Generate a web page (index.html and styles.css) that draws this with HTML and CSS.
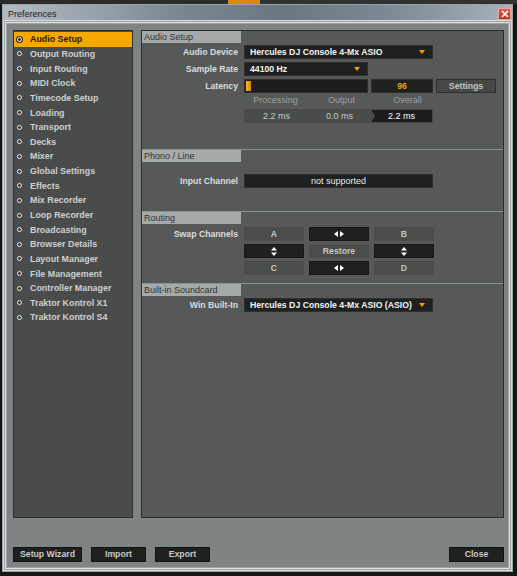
FILE: index.html
```html
<!DOCTYPE html>
<html>
<head>
	<meta charset="utf-8">
	<title>Preferences</title>
	<link rel="stylesheet" href="styles.css">
</head>
<body>
	<div class="taskbar"><span class="tb-left"></span><span class="tb-orange"></span><span class="tb-right"></span></div>
	<div class="window">
		<div class="titlebar">
			<span class="title">Preferences</span>
			<span class="close-btn">
				<svg width="8" height="8" viewBox="0 0 8 8"><path d="M1 1 L7 7 M7 1 L1 7" stroke="#fff" stroke-width="1.6"/></svg>
			</span>
		</div>
		<div class="body">
			<div class="panes">
				<!-- left menu -->
				<ul class="sidebar">
					<li class="active"><span class="dot"></span>Audio Setup</li>
					<li><span class="dot"></span>Output Routing</li>
					<li><span class="dot"></span>Input Routing</li>
					<li><span class="dot"></span>MIDI Clock</li>
					<li><span class="dot"></span>Timecode Setup</li>
					<li><span class="dot"></span>Loading</li>
					<li><span class="dot"></span>Transport</li>
					<li><span class="dot"></span>Decks</li>
					<li><span class="dot"></span>Mixer</li>
					<li><span class="dot"></span>Global Settings</li>
					<li><span class="dot"></span>Effects</li>
					<li><span class="dot"></span>Mix Recorder</li>
					<li><span class="dot"></span>Loop Recorder</li>
					<li><span class="dot"></span>Broadcasting</li>
					<li><span class="dot"></span>Browser Details</li>
					<li><span class="dot"></span>Layout Manager</li>
					<li><span class="dot"></span>File Management</li>
					<li><span class="dot"></span>Controller Manager</li>
					<li><span class="dot"></span>Traktor Kontrol X1</li>
					<li><span class="dot"></span>Traktor Kontrol S4</li>
				</ul>
				<!-- settings page -->
				<div class="main">
					<div class="section sec-audio">
						<div class="sec-head">Audio Setup</div>
						<div class="row">
							<span class="label">Audio Device</span>
							<div class="select wide">Hercules DJ Console 4-Mx ASIO<i class="arrow"></i></div>
						</div>
						<div class="row">
							<span class="label">Sample Rate</span>
							<div class="select mid">44100 Hz<i class="arrow"></i></div>
						</div>
						<div class="row">
							<span class="label">Latency</span>
							<div class="slider"><span class="knob"></span></div>
							<div class="value">96</div>
							<div class="button settings">Settings</div>
						</div>
						<div class="row times-head">
							<span class="label"></span>
							<span class="tcol">Processing</span>
							<span class="tcol">Output</span>
							<span class="tcol">Overall</span>
						</div>
						<div class="row">
							<span class="label"></span>
							<div class="times">
								<span class="tcol">2.2 ms</span>
								<span class="tcol">0.0 ms</span>
								<span class="tcol overall">2.2 ms</span>
							</div>
						</div>
					</div>
					<div class="section sec-phono">
						<div class="sec-head">Phono / Line</div>
						<div class="row">
							<span class="label">Input Channel</span>
							<div class="field wide">not supported</div>
						</div>
					</div>
					<div class="section sec-routing">
						<div class="sec-head">Routing</div>
						<div class="row">
							<span class="label">Swap Channels</span>
							<div class="grid">
								<div class="cell">A</div>
								<div class="cell dark"><svg width="10" height="6" viewBox="0 0 10 6"><path d="M4 0 L0 3 L4 6 Z M6 0 L10 3 L6 6 Z" fill="#fff"/></svg></div>
								<div class="cell">B</div>
								<div class="cell dark"><svg width="6" height="9" viewBox="0 0 6 9"><path d="M3 0 L6 3.6 L0 3.6 Z M0 5.4 L6 5.4 L3 9 Z" fill="#fff"/></svg></div>
								<div class="cell">Restore</div>
								<div class="cell dark"><svg width="6" height="9" viewBox="0 0 6 9"><path d="M3 0 L6 3.6 L0 3.6 Z M0 5.4 L6 5.4 L3 9 Z" fill="#fff"/></svg></div>
								<div class="cell">C</div>
								<div class="cell dark"><svg width="10" height="6" viewBox="0 0 10 6"><path d="M4 0 L0 3 L4 6 Z M6 0 L10 3 L6 6 Z" fill="#fff"/></svg></div>
								<div class="cell">D</div>
							</div>
						</div>
					</div>
					<div class="section sec-builtin">
						<div class="sec-head">Built-in Soundcard</div>
						<div class="row">
							<span class="label">Win Built-In</span>
							<div class="select wide">Hercules DJ Console 4-Mx ASIO (ASIO)<i class="arrow"></i></div>
						</div>
					</div>
				</div>
			</div>
			<div class="footer">
				<div class="button foot wizard">Setup Wizard</div>
				<div class="button foot">Import</div>
				<div class="button foot">Export</div>
				<span class="spacer"></span>
				<div class="button foot">Close</div>
			</div>
		</div>
	</div>
</body>
</html>
```

FILE: styles.css
```css
html, body {
	margin: 0;
	padding: 0;
}
body {
	width: 517px;
	height: 576px;
	overflow: hidden;
	background: #151616;
	font-family: "Liberation Sans", Arial, sans-serif;
	font-size: 8.7px;
	font-weight: bold;
	color: #d2d4d4;
}
.taskbar {
	display: flex;
	height: 4px;
	background: #2a2b2b;
}
.tb-left {
	width: 228px;
}
.tb-orange {
	width: 32px;
	background: #d98a10;
}
.tb-right {
	flex: 1;
	background: #303131;
}
.window {
	margin: 0 4px 0 2px;
	height: 568px;
	box-sizing: border-box;
	border: 1px solid #9aa2a8;
	background: #8f98a0;
	display: flex;
	flex-direction: column;
}
.titlebar {
	height: 17px;
	display: flex;
	align-items: center;
	padding: 0 1px 0 5px;
	background: linear-gradient(90deg, #b3bbc2 0%, #98a2ab 18%, #7a8690 35%, #6a7680 55%, #7c8893 75%, #95a0a9 90%, #a9b2b9 100%);
}
.title {
	flex: 1;
	font-size: 9px;
	font-weight: normal;
	color: #1e2226;
}
.close-btn {
	width: 13px;
	height: 12px;
	box-sizing: border-box;
	border: 1px solid #e8a8a0;
	background: linear-gradient(#e0604e, #b8321e);
	display: flex;
	align-items: center;
	justify-content: center;
}
.body {
	flex: 1;
	margin: 0 2px 2px 2px;
	border: 1px solid #dfe3e3;
	box-shadow: inset 0 0 0 1px #9ca2a2, 0 0 0 1px #9ca2a2, 0 0 0 2px #d8dcdc;
	background: #7e8483;
	padding: 7px 5px 6px 7px;
	display: flex;
	flex-direction: column;
}
.panes {
	display: flex;
	gap: 8px;
	height: 488px;
}
.sidebar {
	list-style: none;
	margin: 0;
	padding: 1px 0 0 0;
	width: 120px;
	box-sizing: border-box;
	border: 1px solid #2b2d2d;
	background: #4a4c4c;
}
.sidebar li {
	height: 14.65px;
	display: flex;
	align-items: center;
	padding-left: 3px;
	font-size: 8.9px;
	color: #cdcfcf;
}
.sidebar li.active {
	background: #f6a700;
	color: #1c1c1c;
}
.dot {
	width: 5px;
	height: 5px;
	box-sizing: border-box;
	border-radius: 50%;
	border: 1.5px solid #eeeeee;
	background: #3a3a3a;
	margin-right: 8px;
}
.sidebar li.active .dot {
	border-color: #ffffff;
	background: #2a2a2a;
	box-shadow: 0 0 0 1px #2a2a2a;
}
.main {
	flex: 1;
	box-sizing: border-box;
	border: 1px solid #2b2d2d;
	background: #575858;
	display: flex;
	flex-direction: column;
}
.section {
	border-top: 1px solid #8c9090;
}
.section:first-child {
	border-top: none;
}
.sec-audio { height: 118px; }
.sec-phono { height: 61px; }
.sec-routing { height: 71px; }
.sec-head {
	width: 97px;
	height: 12px;
	line-height: 12px;
	padding-left: 2px;
	background: #a5a9a9;
	color: #323434;
	font-size: 9px;
	font-weight: normal;
}
.row {
	display: flex;
	align-items: center;
	gap: 3px;
	margin-top: 3px;
	height: 14px;
}
.sec-audio .row:nth-child(2) { margin-top: 2px; }
.label {
	width: 96px;
	text-align: right;
	margin-right: 3px;
	color: #dcdede;
}
.select, .field, .slider, .value, .button, .times, .cell {
	box-sizing: border-box;
	height: 14px;
	line-height: 12px;
	border: 1px solid #2e2f2f;
}
.select {
	position: relative;
	background: #1f2020;
	color: #f4f4f4;
	padding-left: 5px;
}
.wide { width: 189px; }
.mid { width: 124px; }
.arrow {
	position: absolute;
	right: 7px;
	top: 4px;
	width: 0;
	height: 0;
	border-left: 3px solid transparent;
	border-right: 3px solid transparent;
	border-top: 4px solid #f2a200;
}
.slider {
	width: 124px;
	background: #1c1d1d;
	padding: 1px;
}
.knob {
	display: block;
	width: 5px;
	height: 10px;
	background: linear-gradient(90deg, #ffbd30, #d98200);
}
.value {
	width: 62px;
	background: #1f2020;
	color: #f2a000;
	text-align: center;
}
.button {
	background: #464747;
	color: #c4c6c6;
	text-align: center;
}
.settings {
	width: 60px;
}
.times-head {
	margin-top: 1px;
	height: 12px;
}
.times-head .tcol {
	width: 63px;
	text-align: center;
	color: #9c9e9e;
	font-weight: normal;
	font-size: 9px;
}
.times {
	display: flex;
	width: 189px;
	background: #4a4b4b;
	border-color: #474848;
}
.times .tcol {
	width: 63px;
	text-align: center;
	color: #c8caca;
	font-weight: normal;
	font-size: 9px;
}
.times .overall {
	position: relative;
	flex: 1;
	background: #1c1d1d;
	color: #ffffff;
}
.times .overall::before {
	content: "";
	position: absolute;
	left: 0;
	top: 0;
	border-top: 6px solid transparent;
	border-bottom: 6px solid transparent;
	border-left: 4px solid #4a4b4b;
}
.sec-phono .row {
	margin-top: 12px;
}
.field {
	background: #1f2020;
	color: #e8e8e8;
	text-align: center;
	font-weight: normal;
	font-size: 9px;
}
.sec-routing .row {
	height: auto;
	align-items: flex-start;
}
.sec-routing .label {
	line-height: 14px;
}
.grid {
	display: grid;
	grid-template-columns: 60px 60px 60px;
	gap: 3px 5px;
}
.cell {
	background: #4b4c4c;
	border-color: #4b4c4c;
	color: #c4c6c6;
	display: flex;
	align-items: center;
	justify-content: center;
}
.cell.dark {
	background: #1f2020;
	border-color: #161717;
}
.sec-builtin .row {
	margin-top: 2px;
}
.footer {
	margin-top: 29px;
	display: flex;
	gap: 9px;
}
.foot {
	width: 55px;
	height: 15px;
	line-height: 13px;
	background: #1f2020;
	border-color: #111212;
	color: #c8caca;
}
.wizard {
	width: 69px;
}
.spacer {
	flex: 1;
}
```
